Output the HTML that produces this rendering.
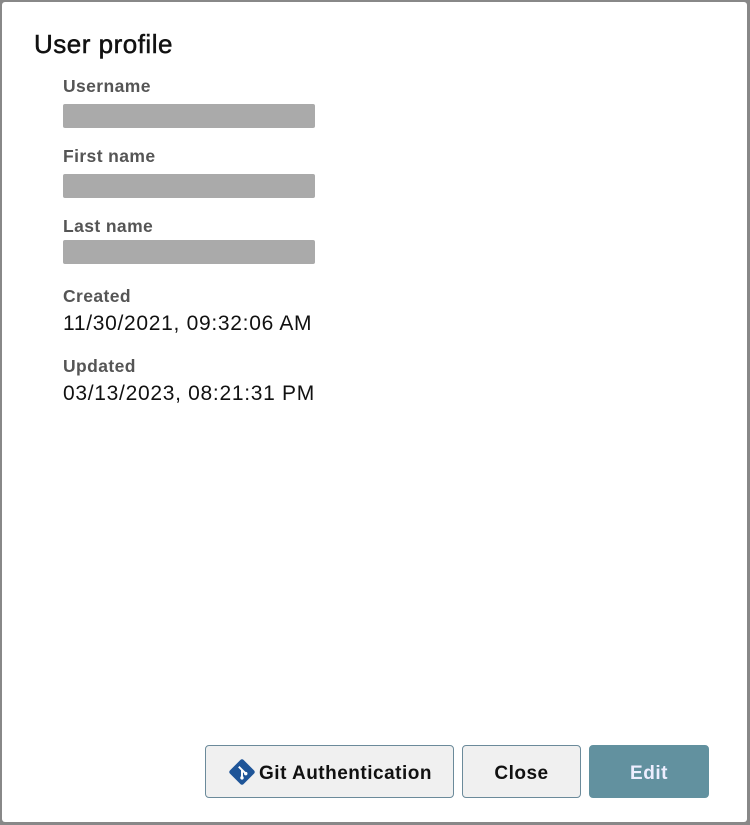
<!DOCTYPE html>
<html><head><style>
*{margin:0;padding:0;box-sizing:border-box}
body{width:750px;height:825px;background:#888;font-family:"Liberation Sans",sans-serif;position:relative;overflow:hidden}
.win{position:absolute;left:2px;top:2px;width:745px;height:820px;background:#fff;border-radius:3px}
.t{position:absolute;left:34px;top:29px;font-size:26px;color:#111;letter-spacing:0.5px;-webkit-text-stroke:0.5px #111}
.l{position:absolute;left:63px;font-size:17.5px;font-weight:bold;color:#555;letter-spacing:0.4px}
.b{position:absolute;left:63px;width:252px;height:24px;background:#aaa;border-radius:2px}
.v{position:absolute;left:63px;font-size:21px;color:#111;letter-spacing:0.7px}
.btn{position:absolute;top:745px;height:53px;padding-top:4px;border:1px solid #6b8a9a;border-radius:4px;background:#f0f0f0;font-size:19px;font-weight:bold;color:#111;display:flex;align-items:center;justify-content:center;letter-spacing:0.5px}
</style></head><body>
<div class="win"></div>
<div class="t">User profile</div>
<div class="l" style="top:76px">Username</div>
<div class="b" style="top:104px"></div>
<div class="l" style="top:146px">First name</div>
<div class="b" style="top:174px"></div>
<div class="l" style="top:216px">Last name</div>
<div class="b" style="top:240px"></div>
<div class="l" style="top:286px">Created</div>
<div class="v" style="top:312px">11/30/2021, 09:32:06 AM</div>
<div class="l" style="top:356px">Updated</div>
<div class="v" style="top:382px">03/13/2023, 08:21:31 PM</div>
<div class="btn" style="left:205px;width:249px"><svg width="30" height="30" viewBox="0 0 28 28" style="margin-right:2px;margin-top:-4px"><rect x="5" y="5" width="18" height="18" rx="2" transform="rotate(45 14 14)" fill="#1f5598"/><path d="M11 9l6 6M14 12v7" stroke="#fff" stroke-width="1.8" fill="none"/><circle cx="14" cy="19.5" r="1.6" fill="#fff"/><circle cx="17.5" cy="15.5" r="1.6" fill="#fff"/></svg>Git Authentication</div>
<div class="btn" style="left:462px;width:119px">Close</div>
<div class="btn" style="left:589px;width:120px;background:#62919f;border-color:#62919f;color:#eef">Edit</div>
</body></html>
